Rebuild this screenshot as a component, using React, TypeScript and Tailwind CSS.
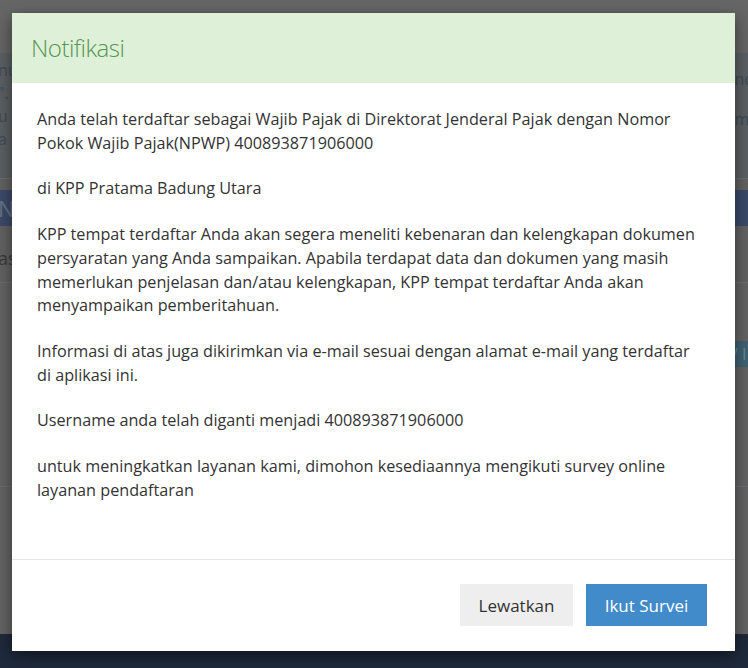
import React from "react";

export default function App() {
  const font = { fontFamily: '"Open Sans", "Liberation Sans", sans-serif' };
  return (
    <div className="relative w-[748px] h-[668px] overflow-hidden bg-[#646464]" style={font}>
      {/* background page (dimmed) */}
      <div className="flex flex-col w-full h-full">
        <div className="h-[53px] bg-[#666666]" />
        <div className="h-[125px] bg-[#5b6064] flex justify-between text-[#3e4b55] text-[16px]">
          <div className="flex flex-col leading-[23px] pt-[6px] -ml-[2px]">
            <span>nu</span>
            <span>".</span>
            <span>u</span>
            <span>a</span>
          </div>
          <div className="flex flex-col leading-[40px] pt-[6px] pr-0 -mr-[6px]">
            <span>nd</span>
            <span>m</span>
          </div>
        </div>
        <div className="h-[12px] bg-[#626262] border-t border-[#6c6c6c]" />
        <div className="h-[36px] bg-[#3c4b6a] flex items-center text-[#6a7385] text-[22px]">
          <span className="-ml-[2px]">N</span>
        </div>
        <div className="h-[57px] bg-[#626262] flex items-center text-[#3a3a3a] text-[18px] border-b border-[#6e6e6e] pt-[8px]">
          <span className="-ml-[2px]">as</span>
        </div>
        <div className="h-[84px] bg-[#646464] flex flex-col justify-end items-end">
          <div className="w-[20px] h-[26px] bg-[#3f6272] text-[#6b8a96] text-[16px] leading-[26px] pl-[4px]">/ I</div>
        </div>
        <div className="h-[120px] bg-[#646464] border-b border-[#6c6f7a]" />
        <div className="flex-1 bg-[#646464]" />
        <div className="h-[34px] bg-[#1f2a3c]" />
      </div>

      {/* modal */}
      <div className="absolute left-[12px] top-[13px] w-[723px] bg-white shadow-[0_5px_15px_rgba(0,0,0,0.5)] flex flex-col">
        <div className="h-[70px] bg-[#dff0d8] flex items-center pl-[19px]">
          <span className="text-[24px] font-light text-[#559655] tracking-[-0.5px]">Notifikasi</span>
        </div>
        <div className="pt-[25px] pl-[25px] pr-[15px] pb-[57px] text-[16.2px] leading-[23.7px] text-[#333333] flex flex-col gap-[22px]">
          <p>
            Anda telah terdaftar sebagai Wajib Pajak di Direktorat Jenderal Pajak dengan Nomor
            <br />
            Pokok Wajib Pajak(NPWP) 400893871906000
          </p>
          <p>di KPP Pratama Badung Utara</p>
          <p>
            KPP tempat terdaftar Anda akan segera meneliti kebenaran dan kelengkapan dokumen
            <br />
            persyaratan yang Anda sampaikan. Apabila terdapat data dan dokumen yang masih
            <br />
            memerlukan penjelasan dan/atau kelengkapan, KPP tempat terdaftar Anda akan
            <br />
            menyampaikan pemberitahuan.
          </p>
          <p>
            Informasi di atas juga dikirimkan via e-mail sesuai dengan alamat e-mail yang terdaftar
            <br />
            di aplikasi ini.
          </p>
          <p>Username anda telah diganti menjadi 400893871906000</p>
          <p>
            untuk meningkatkan layanan kami, dimohon kesediaannya mengikuti survey online
            <br />
            layanan pendaftaran
          </p>
        </div>
        <div className="border-t border-[#e5e5e5] pt-[24px] pb-[25px] pr-[28px] flex justify-end gap-[13px]">
          <button className="w-[113px] h-[42px] bg-[#eeeeee] text-[#333333] text-[17px]">Lewatkan</button>
          <button className="w-[121px] h-[42px] bg-[#428bca] text-white text-[17px]">Ikut Survei</button>
        </div>
      </div>
    </div>
  );
}
